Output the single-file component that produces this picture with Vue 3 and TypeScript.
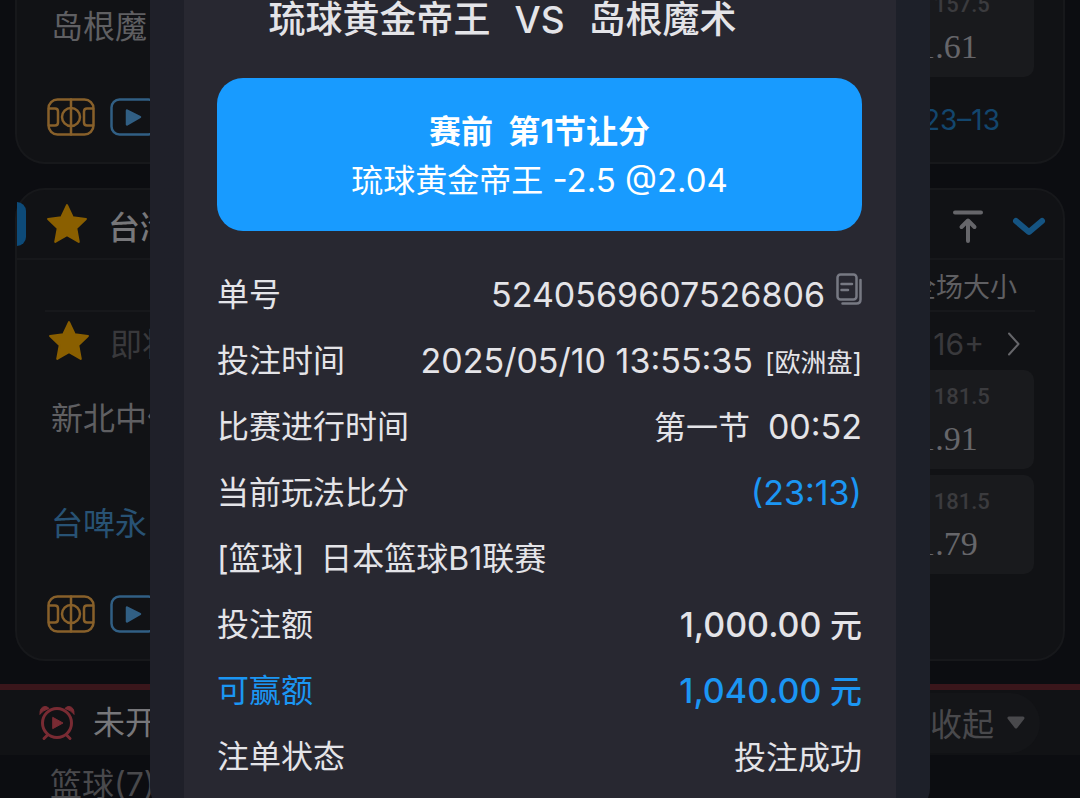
<script setup lang="ts">
interface Odds {
  side: string
  line: string
  price: string
}

interface Row {
  label: string
  lead?: string
  digits?: string
  tail?: string
  note?: string
  copy?: boolean
  tone?: 'tally' | 'amount' | 'win'
}

const upcoming: { team: string; followed: boolean; odds: Odds }[] = [
  { team: '新北中信', followed: false, odds: { side: '大', line: '181.5', price: '1.91' } },
  { team: '台啤永', followed: true, odds: { side: '小', line: '181.5', price: '1.79' } },
]

const rows: Row[] = [
  { label: '单号', digits: '5240569607526806', copy: true },
  { label: '投注时间', digits: '2025/05/10 13:55:35', note: '[欧洲盘]' },
  { label: '比赛进行时间', lead: '第一节  ', digits: '00:52' },
  { label: '当前玩法比分', digits: '(23:13)', tone: 'tally' },
  { label: '[篮球]\u2002日本篮球B1联赛' },
  { label: '投注额', digits: '1,000.00', tail: ' 元', tone: 'amount' },
  { label: '可赢额', digits: '1,040.00', tail: ' 元', tone: 'win' },
  { label: '注单状态', lead: '投注成功' },
]

const starPath =
  'M20 2 L25.4 13.6 L38 15.2 L28.8 24 L31.2 37 L20 30.6 L8.8 37 L11.2 24 L2 15.2 L14.6 13.6 Z'
</script>

<template>
  <div class="screen">
    <main class="board">
      <section class="card card-first">
        <div class="line">
          <span class="team">岛根魔</span>
          <button class="odds" type="button">
            <span class="odds-label">小 157.5</span>
            <span class="odds-price">1.61</span>
          </button>
        </div>
        <div class="tools">
          <button class="tool" type="button" aria-label="court">
            <svg class="court" viewBox="0 0 48 38">
              <rect x="1.5" y="1.5" width="45" height="35" rx="9" />
              <path d="M24 1.5V36.5M2 10.5H8Q11 10.5 11 13.5V24.5Q11 27.5 8 27.5H2M46 10.5H40Q37 10.5 37 13.5V24.5Q37 27.5 40 27.5H46" />
              <circle cx="24" cy="19" r="9" />
            </svg>
          </button>
          <button class="tool" type="button" aria-label="play">
            <svg class="play" viewBox="0 0 48 38">
              <rect x="1.5" y="1.5" width="45" height="35" rx="8" />
              <path d="M17 12.5L30 19L17 26.5Z" />
            </svg>
          </button>
          <span class="score">23–13</span>
        </div>
      </section>

      <section class="card">
        <header class="league">
          <i class="marker"></i>
          <button class="star" type="button" aria-label="favourite">
            <svg viewBox="0 0 40 40"><path :d="starPath" /></svg>
          </button>
          <h2>台湾</h2>
          <button class="top" type="button" aria-label="top">
            <svg viewBox="0 0 32 36">
              <path d="M3 3.5H29M16 32V12M9.5 18L16 11.5L22.5 18" />
            </svg>
          </button>
          <button class="fold" type="button" aria-label="fold">
            <svg viewBox="0 0 34 20"><path d="M4 4L17 15L30 4" /></svg>
          </button>
        </header>
        <div class="columns"><span>全场大小</span></div>
        <div class="match">
          <button class="star" type="button" aria-label="favourite">
            <svg viewBox="0 0 40 40"><path :d="starPath" /></svg>
          </button>
          <span class="soon">即将</span>
          <a class="more" href="#">
            16+
            <svg viewBox="0 0 12 24"><path d="M1 1.5L10.5 12L1 22.5" /></svg>
          </a>
        </div>
        <div v-for="item in upcoming" :key="item.team" class="line">
          <span class="team" :class="{ followed: item.followed }">{{ item.team }}</span>
          <button class="odds" type="button">
            <span class="odds-label">{{ item.odds.side }} {{ item.odds.line }}</span>
            <span class="odds-price">{{ item.odds.price }}</span>
          </button>
        </div>
        <div class="tools">
          <button class="tool" type="button" aria-label="court">
            <svg class="court" viewBox="0 0 48 38">
              <rect x="1.5" y="1.5" width="45" height="35" rx="9" />
              <path d="M24 1.5V36.5M2 10.5H8Q11 10.5 11 13.5V24.5Q11 27.5 8 27.5H2M46 10.5H40Q37 10.5 37 13.5V24.5Q37 27.5 40 27.5H46" />
              <circle cx="24" cy="19" r="9" />
            </svg>
          </button>
          <button class="tool" type="button" aria-label="play">
            <svg class="play" viewBox="0 0 48 38">
              <rect x="1.5" y="1.5" width="45" height="35" rx="8" />
              <path d="M17 12.5L30 19L17 26.5Z" />
            </svg>
          </button>
        </div>
      </section>

      <section class="pending">
        <header>
          <svg class="alarm" viewBox="0 0 38 38">
            <circle cx="19" cy="19" r="14.5" />
            <path d="M9.5 31L6 34.5M28.5 31L32 34.5" />
            <path class="solid" d="M2 10Q1.5 3 7 2.5Q10 2.5 11 4.5Q5.5 6 2 10ZM36 10Q36.5 3 31 2.5Q28 2.5 27 4.5Q32.5 6 36 10Z" />
            <path class="solid" d="M15 13.5L25 19L15 24.5Z" />
          </svg>
          <h2>未开赛</h2>
          <button class="collapse" type="button">
            <span>收起</span>
            <svg viewBox="0 0 20 14"><path d="M3 2H17L10 11Z" /></svg>
          </button>
        </header>
        <p>篮球(7)</p>
      </section>
    </main>

    <div class="sheet" role="dialog" aria-labelledby="bet-title">
      <div class="slip">
        <h1 id="bet-title">琉球黄金帝王<span>VS</span>岛根魔术</h1>
        <div class="pick">
          <strong>赛前&nbsp; 第1节让分</strong>
          <p>琉球黄金帝王<span> -2.5 @2.04</span></p>
        </div>
        <dl>
          <div v-for="row in rows" :key="row.label" class="row" :class="row.tone">
            <dt>{{ row.label }}</dt>
            <dd v-if="row.lead || row.digits">
              <span>{{ row.lead }}<span class="digits">{{ row.digits }}</span>{{ row.tail }}</span>
              <small v-if="row.note">{{ row.note }}</small>
              <button v-if="row.copy" class="copy" type="button" aria-label="copy">
                <svg viewBox="0 0 26 32">
                  <rect x="1.5" y="1.5" width="19" height="25" rx="3" />
                  <path d="M5.5 11H16M5.5 17H12M24.5 7V26.5Q24.5 30.5 20.5 30.5H6.5" />
                </svg>
              </button>
            </dd>
          </div>
        </dl>
      </div>
    </div>
  </div>
</template>

<style>
body {
  background: #0c0d11;
}
</style>

<style scoped>
.screen {
  position: relative;
  height: 100vh;
  overflow: hidden;
  background: #0c0d11;
  color: #5f5f62;
  font-family: Inter, 'Noto Sans CJK SC', sans-serif;
  font-size: 32px;
  line-height: 40px;
}
.screen * {
  box-sizing: border-box;
}
button {
  margin: 0;
  padding: 0;
  border: 0;
  background: none;
  color: inherit;
  font: inherit;
}
h1,
h2,
p,
dl,
dd {
  margin: 0;
  font-size: inherit;
  font-weight: 400;
}
svg {
  display: block;
  fill: none;
  stroke-linecap: round;
  stroke-linejoin: round;
}
.card {
  margin: 24px 15px 0;
  padding-bottom: 26px;
  border: 2px solid #17181b;
  border-radius: 30px;
  background: #111215;
}
.card-first {
  margin-top: -22px;
  border-top: 0;
  border-radius: 0 0 30px 30px;
}
.line {
  display: grid;
  grid-template-columns: 1fr 168px;
  align-items: center;
  padding: 0 29px 0 34px;
}
.line + .line {
  margin-top: 6px;
}
.team {
  padding-bottom: 2px;
}
.followed {
  color: #285274;
}
.odds {
  display: flex;
  flex-direction: column;
  align-items: center;
  height: 99px;
  padding: 10px 4px 0 0;
  border-radius: 10px;
  background: #191a1d;
}
.odds-label {
  color: #3b3b3e;
  font-family: Roboto, 'Noto Sans CJK SC', sans-serif;
  font-size: 22px;
  font-weight: 500;
  line-height: 34px;
}
.odds-price {
  color: #66666a;
  font-family: 'Liberation Serif', serif;
  font-size: 34px;
  line-height: 50px;
}
.tools {
  display: flex;
  align-items: center;
  gap: 15px;
  margin-top: 21px;
  padding: 0 63px 0 30px;
}
.tool svg {
  width: 48px;
  height: 38px;
  stroke-width: 2.5;
}
.court {
  stroke: #88602a;
}
.play {
  stroke: #315f84;
}
.play path {
  fill: #315f84;
}
.score {
  height: 32px;
  margin-left: auto;
  color: #13466d;
  font-size: 28px;
  line-height: 38px;
}
.league {
  display: flex;
  align-items: center;
  height: 70px;
  padding-right: 17px;
  border-bottom: 2px solid #17181b;
}
.league h2 {
  margin-left: 20px;
  padding-top: 8px;
  color: #77777a;
  font-weight: 500;
}
.marker {
  width: 9px;
  height: 44px;
  margin-right: 20px;
  border-radius: 0 9px 9px 0;
  background: #0d4a78;
}
.star svg {
  width: 42px;
  height: 42px;
  fill: #8a5f00;
  stroke: #8a5f00;
  stroke-width: 2;
}
.top {
  margin-left: auto;
  padding-top: 6px;
}
.top svg {
  width: 32px;
  height: 36px;
  stroke: #66666a;
  stroke-width: 4;
}
.fold {
  margin-left: 28px;
  padding-top: 6px;
}
.fold svg {
  width: 34px;
  height: 20px;
  stroke: #155482;
  stroke-width: 6;
}
.columns {
  height: 52px;
  margin: 0 28px;
  padding: 8px 18px 0 0;
  border-bottom: 2px solid #17181b;
  font-size: 27px;
  text-align: right;
}
.match {
  display: flex;
  align-items: center;
  height: 58px;
  padding: 0 43px 0 31px;
  color: #39393c;
}
.soon {
  margin-left: 20px;
  padding-top: 8px;
}
.more {
  display: flex;
  align-items: center;
  gap: 24px;
  margin-left: auto;
  padding-top: 6px;
  color: inherit;
  font-size: 30px;
  text-decoration: none;
}
.more svg {
  width: 12px;
  height: 24px;
  stroke: #66666a;
  stroke-width: 2;
}
.pending {
  margin-top: 23px;
  border-top: 6px solid #3a161b;
}
.pending header {
  display: flex;
  align-items: center;
  height: 65px;
  padding: 0 40px 0 38px;
  background: #111215;
}
.pending h2 {
  margin-left: 17px;
  color: #77777a;
}
.alarm {
  width: 38px;
  height: 38px;
  stroke: #792b33;
  stroke-width: 3;
}
.alarm .solid {
  fill: #792b33;
  stroke-width: 1;
}
.collapse {
  display: flex;
  align-items: center;
  gap: 12px;
  height: 60px;
  margin-left: auto;
  padding: 0 14px 0 30px;
  border-radius: 30px;
  background: #141518;
  color: #49494c;
}
.collapse span {
  padding-top: 4px;
}
.collapse svg {
  width: 20px;
  height: 14px;
  fill: #49494c;
  stroke: #49494c;
  stroke-width: 3;
}
.pending p {
  padding: 10px 50px;
  color: #49494c;
}
.sheet {
  position: absolute;
  top: 0;
  right: 150px;
  bottom: -14px;
  left: 150px;
  padding: 0 34px;
  border-radius: 0 0 24px 24px;
  background: linear-gradient(90deg, #1f2029, #1d2029);
}
.slip {
  height: 100%;
  padding: 0 34px 0 33px;
  background: #282831;
  color: #e4e4e8;
}
.slip h1 {
  height: 78px;
  padding-right: 74px;
  font-size: 37px;
  font-weight: 500;
  line-height: 40px;
  text-align: center;
  white-space: nowrap;
}
h1 span {
  margin: 0 24px;
}
.pick {
  display: flex;
  flex-direction: column;
  align-items: center;
  gap: 8px;
  padding: 34px 0 30px;
  border-radius: 26px;
  background: #189bff;
  color: #fff;
}
.pick strong {
  font-weight: 700;
}
.pick span {
  font-size: 33px;
}
.slip dl {
  margin-top: 31px;
}
.row {
  display: flex;
  justify-content: space-between;
  align-items: center;
  height: 66px;
  white-space: pre;
}
.row dd {
  display: flex;
  align-items: center;
}
.digits {
  font-size: 34px;
}
.row small {
  margin-left: 12px;
  padding-top: 4px;
  font-size: 26px;
}
.copy {
  margin-left: 11px;
  padding-bottom: 12px;
}
.copy svg {
  width: 26px;
  height: 32px;
  stroke: #777983;
  stroke-width: 2.5;
}
.tally dd,
.win {
  color: #1b96f3;
}
.amount dd,
.win dd {
  font-weight: 500;
}
</style>
